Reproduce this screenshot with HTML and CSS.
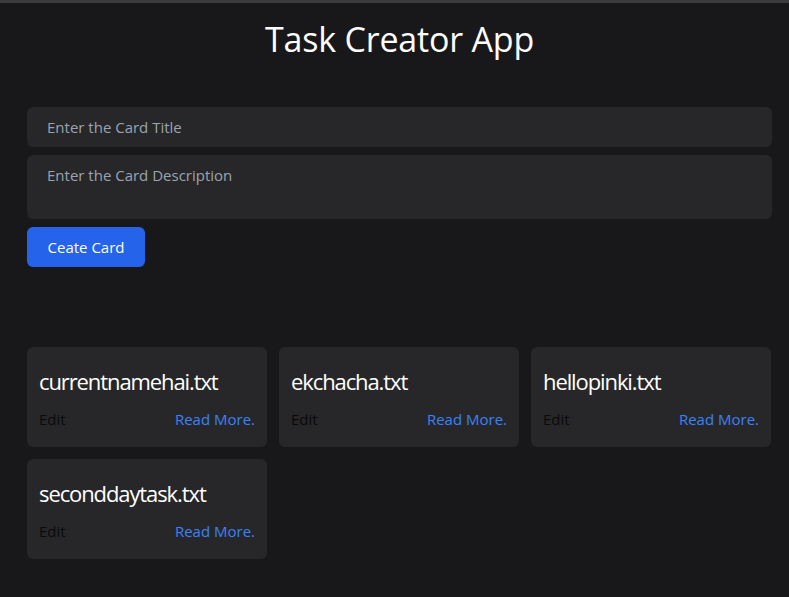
FILE: index.html
```html
<!DOCTYPE html>
<html>
<head>
<meta charset="utf-8">
<link rel="stylesheet" href="styles.css">
</head>
<body>
<div class="topbar"></div>
<main class="app">
  <h1 class="title">Task Creator App</h1>
  <form class="form">
    <input class="field" type="text" placeholder="Enter the Card Title">
    <textarea class="field area" placeholder="Enter the Card Description"></textarea>
    <button class="btn" type="button">Ceate Card</button>
  </form>
  <section class="cards">
    <div class="card"><h2 class="card-title">currentnamehai.txt</h2><div class="card-foot"><span class="edit">Edit</span><a class="more">Read More.</a></div></div>
    <div class="card"><h2 class="card-title">ekchacha.txt</h2><div class="card-foot"><span class="edit">Edit</span><a class="more">Read More.</a></div></div>
    <div class="card"><h2 class="card-title">hellopinki.txt</h2><div class="card-foot"><span class="edit">Edit</span><a class="more">Read More.</a></div></div>
    <div class="card"><h2 class="card-title">seconddaytask.txt</h2><div class="card-foot"><span class="edit">Edit</span><a class="more">Read More.</a></div></div>
  </section>
</main>
</body>
</html>
```
FILE: styles.css
```css
* { box-sizing: border-box; }
html, body { margin: 0; padding: 0; }
body {
  background: #18181b;
  color: #fff;
  font-family: "Open Sans", "Noto Sans", sans-serif;
  height: 597px;
  overflow: hidden;
}
.topbar { height: 3px; background: #3c3c3f; }
.app { padding: 0 17px 0 27px; }
.title {
  margin: 14px 0 0;
  text-align: center;
  font-weight: 400;
  font-size: 34px;
  line-height: 44px;
  letter-spacing: -0.2px;
}
.form {
  margin-top: 46px;
  display: flex;
  flex-direction: column;
  gap: 8px;
  align-items: flex-start;
}
.field {
  width: 745px;
  height: 40px;
  background: #27272a;
  border: none;
  border-radius: 6px;
  padding: 0 20px;
  color: #fff;
  font-family: inherit;
  font-size: 15px;
  letter-spacing: 0;
  outline: none;
}
.field::placeholder { color: #9ca3af; }
.area {
  height: 64px;
  padding: 10px 20px;
  resize: none;
}
.btn {
  width: 118px;
  height: 40px;
  background: #2563eb;
  border: none;
  border-radius: 6px;
  color: #fff;
  font-family: inherit;
  font-size: 15px;
  letter-spacing: 0;
  padding: 0;
}
.cards {
  margin-top: 80px;
  display: grid;
  grid-template-columns: repeat(3, 240px);
  gap: 12px;
}
.card {
  background: #27272a;
  border-radius: 6px;
  height: 100px;
  padding: 19px 12px 0;
}
.card-title {
  margin: 0;
  font-weight: 400;
  font-size: 22px;
  line-height: 30px;
  letter-spacing: -1.1px;
}
.card-foot {
  margin-top: 13px;
  display: flex;
  justify-content: space-between;
  font-size: 15px;
  line-height: 20px;
  letter-spacing: 0;
}
.edit { color: #0a0a0a; }
.more { color: #3b82f6; }
```
